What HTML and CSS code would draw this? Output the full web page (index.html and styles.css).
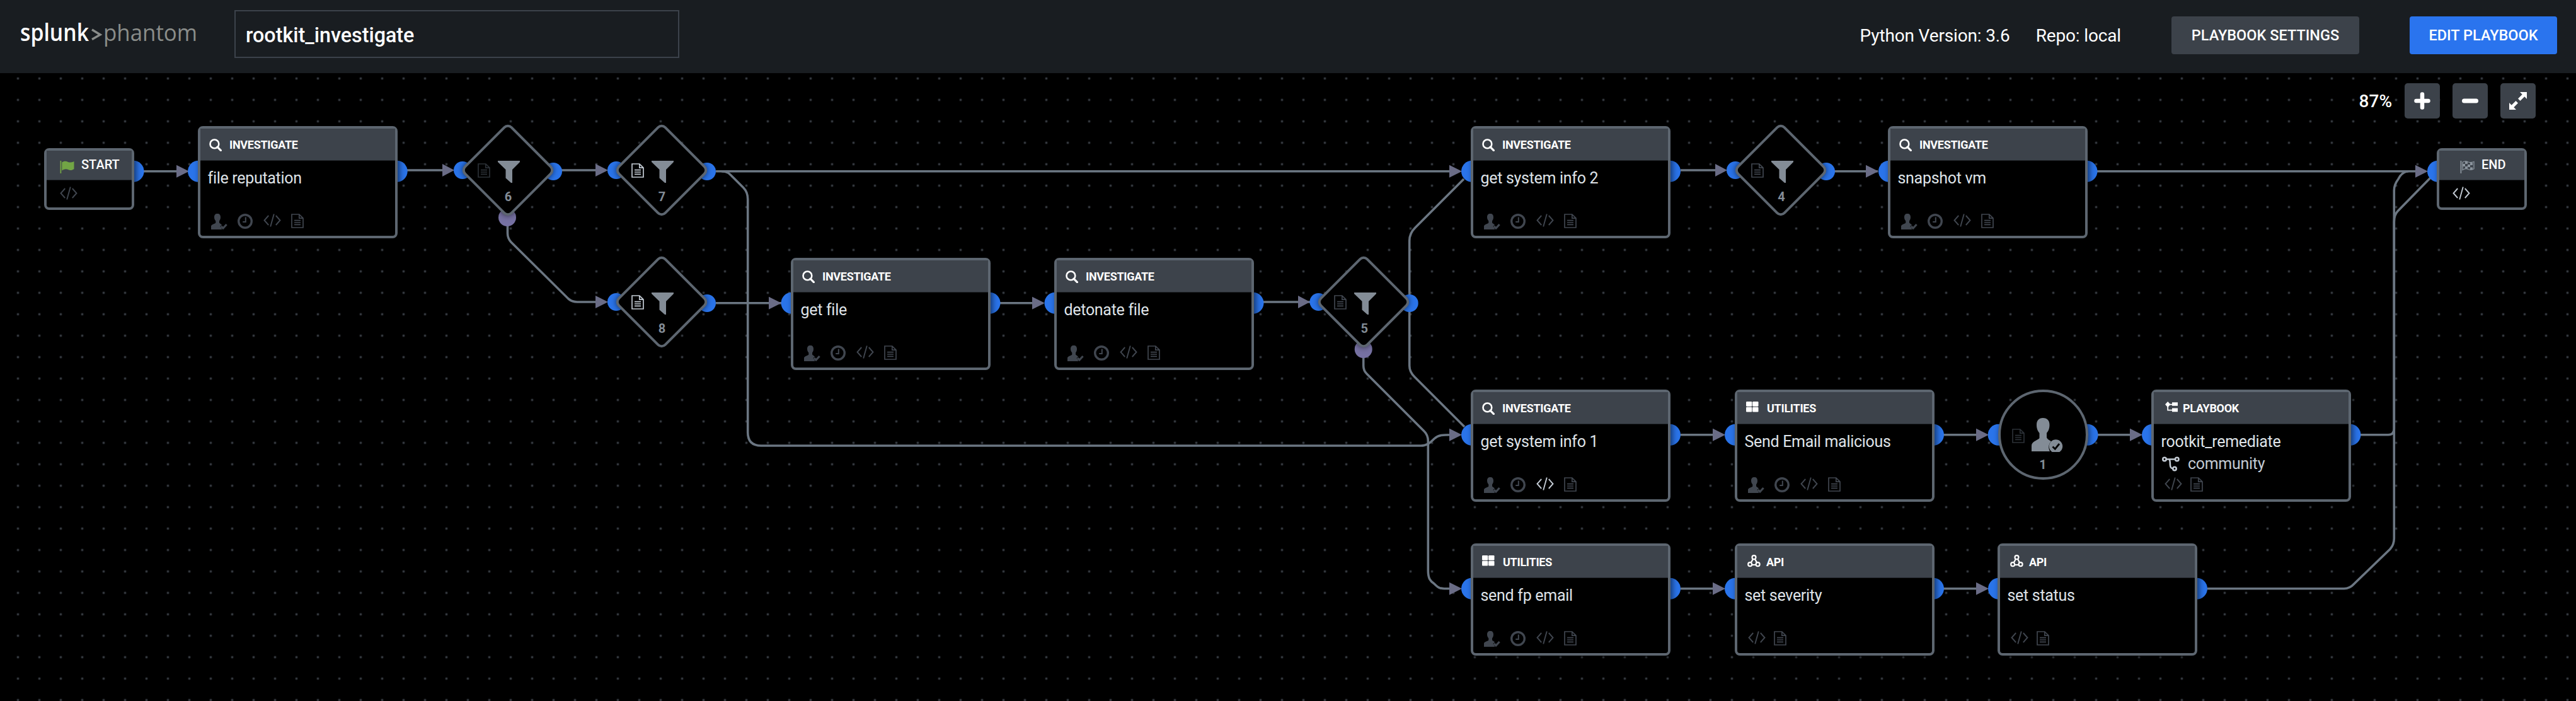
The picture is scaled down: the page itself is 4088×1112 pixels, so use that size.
FILE: index.html
```html
<!DOCTYPE html>
<html lang="en">
<head>
<meta charset="utf-8">
<title>rootkit_investigate</title>
<link rel="stylesheet" href="styles.css">
</head>
<body>
<svg class="sprite" aria-hidden="true">
  <symbol id="search" viewBox="0 0 20 20"><circle cx="8.4" cy="8.4" r="6.9" fill="none" stroke="currentColor" stroke-width="2.6"/><path d="M13 13.2L18.4 18.6" stroke="currentColor" stroke-width="3.2" stroke-linecap="round"/></symbol>
  <symbol id="grid" viewBox="0 0 20 17"><rect x="0" y="0" width="9.3" height="7.8" rx="1.3"/><rect x="10.2" y="0" width="9.3" height="7.8" rx="1.3"/><rect x="0" y="8.7" width="9.3" height="7.8" rx="1.3"/><rect x="10.2" y="8.7" width="9.3" height="7.8" rx="1.3"/></symbol>
  <symbol id="api" viewBox="0 0 21 20"><g fill="none" stroke="currentColor" stroke-width="2.2"><circle cx="10.5" cy="4.2" r="3"/><circle cx="4.2" cy="15.2" r="3"/><circle cx="16.6" cy="15.2" r="3"/><path d="M9 6.8L5.7 12.6M12 6.8L15.2 12.6M7.2 16H13.6"/></g></symbol>
  <symbol id="flow" viewBox="0 0 20 17"><path d="M4.2 0L8.4 4.6L4.2 9.2L0 4.6ZM11 1.2H20V6.8H11ZM11 10.5H20V16.3H11Z"/><path d="M7 4.6H12M4.2 8V13.7H12" fill="none" stroke="currentColor" stroke-width="1.8"/></symbol>
  <symbol id="branch" viewBox="0 0 28 24"><g fill="none" stroke="currentColor" stroke-width="2.6"><circle cx="4" cy="4.5" r="2.7"/><circle cx="23.8" cy="4.5" r="2.7"/><circle cx="20" cy="19.5" r="2.7"/><path d="M6.8 4.5H21M11.5 4.5C13.5 7 12.5 10 13 14C13.3 17.5 14.5 19 17 19.2"/></g></symbol>
  <symbol id="user" viewBox="0 0 26 25"><path d="M10 0C13.400 0 15 2 15 5.500C15 8.500 14.200 10 13 11.500V14.500C14 15.800 16.500 16.400 17 18L14.500 20L17.500 25H0V19.500C1 16.500 6.500 16 7.300 14.500V11.500C6 10 5 8.500 5 5.500C5 2 6.600 0 10 0Z"/><path d="M15.800 20L19 23L24.600 17" fill="none" stroke="currentColor" stroke-width="3.200"/></symbol>
  <symbol id="clock" viewBox="0 0 24 24"><circle cx="12" cy="12" r="10.3" fill="none" stroke="currentColor" stroke-width="3.4"/><path d="M12.8 5.500V13H8.200" fill="none" stroke="currentColor" stroke-width="2"/></symbol>
  <symbol id="code" viewBox="0 0 28 21"><path d="M8.200 3L1.500 10.500L8.200 18M19.800 3L26.500 10.500L19.800 18M16.800 .5L11.200 20.500" fill="none" stroke="currentColor" stroke-width="1.900"/></symbol>
  <symbol id="doc" viewBox="0 0 20 23"><path d="M1 1H12.800L19 7.200V22H1ZM12.800 1V7.200H19M5 10.700H15M5 14H15M5 17.300H15" fill="none" stroke="currentColor" stroke-width="1.700"/></symbol>
  <symbol id="funnel" viewBox="0 0 35 35"><path d="M0 0H35V2L23 14V35H21L12.500 27.500V14L0 2Z"/></symbol>
  <symbol id="flag" viewBox="0 0 23 21"><path d="M.5 1H2.300V21H.5Z"/><path d="M3.300 3.500C7 1 10 1.500 13 3C16 4.200 19 3.500 22.500 2V14C19 16.500 16 16.500 13 15C10 13.500 7 14 3.300 16.500Z"/></symbol>
  <symbol id="finish" viewBox="0 0 23 21"><path d="M.5 1H2.300V21H.5Z"/><path d="M4 3.300C7 1.300 10 1.600 13 3C16 4.200 19 3.500 22 2.500V13.800C19 15.800 16 15.800 13 14.500C10 13 7 13.500 4 15.500Z" fill="none" stroke="currentColor" stroke-width="1.300"/><path d="M8 2H12V6H8ZM16 4H20V8H16ZM4 6H8V10H4ZM12 7H16V11H12ZM8 10H12V13.500H8ZM16 11.500H20V15H16Z"/></symbol>
  <symbol id="approver" viewBox="0 0 50 54"><path d="M18 0C25 0 28.500 4 28.500 11C28.500 17 26.500 21 24 24V31C25 34 28.500 35.500 31 37C26.500 42 26.500 48 29 53H0V44C0 37 10 35.500 12.500 32V24C10 21 8 17 8 11C8 4 11.500 0 18 0Z"/><circle cx="38.500" cy="45" r="10.700"/><path d="M33.500 45.500L37.300 49.200L44 41" fill="none" stroke="#000" stroke-width="2.800"/></symbol>
</svg>

<header class="topbar">
  <svg class="logo" width="290" height="64" viewBox="0 0 290 64" role="img" aria-label="splunk&gt;phantom">
    <text class="logo-main" x="0" y="43" textLength="109" lengthAdjust="spacingAndGlyphs">splunk</text>
    <path class="logo-caret" d="M114 25L127 33L114 40.500"/>
    <text class="logo-sub" x="132" y="43" textLength="149" lengthAdjust="spacingAndGlyphs">phantom</text>
  </svg>
  <div class="name-field">rootkit_investigate</div>
  <div class="meta"><span>Python Version: 3.6</span><span>Repo: local</span></div>
  <button class="btn btn-settings">PLAYBOOK SETTINGS</button>
  <button class="btn btn-edit">EDIT PLAYBOOK</button>
</header>

<main class="canvas">
  <svg class="edges" width="4088" height="1112" viewBox="0 0 4088 1112">
    <g class="wires">
      <path d="M228 271.700H285M646 270H705M890 270H950M1136 271.700H2305M1587 480.700H1655M1136 480.700H1240M2005 479H2080M2667 270H2725M2911 271.700H2980M3328 271.700H3840M2667 689.700H2720M3084 689.700H3140M3329 689.700H3385M2667 933.700H2720M3084 933.700H3140"/>
      <path d="M805.500 355V370Q805.500 378 811 384L902 474Q908 479 916 479H950"/>
      <path d="M1145 271.700C1155 271.700 1158 276 1164 282L1180 298Q1186.700 305 1186.700 316V686Q1186.700 707 1208 707H2255C2264 707 2269 703 2276 696C2283 690 2289 689.700 2305 689.700"/>
      <path d="M2323 284L2246 361Q2236.700 370 2236.700 382V580Q2236.700 590 2245 598L2324 677"/>
      <path d="M2163.700 560V580Q2163.700 588 2169 593L2260 684Q2266.300 690 2266.300 700V905C2266.300 918 2270 922 2276 926C2282 932 2285 933.700 2292 933.700H2305"/>
      <path d="M3746 689.700H3790Q3799.300 689.700 3799.300 680V302Q3799.300 293 3806 284Q3812 272 3822 271.700"/>
      <path d="M3503 933.700H3720Q3729 933.700 3736 926L3793 871Q3799.300 864 3799.300 854V352Q3799.300 341 3805 335L3857 282"/>
    </g>
    <g class="heads">
      <path d="M280 261.700L300 271.700L280 281.700ZM702 260L721 270L702 280ZM945 260L965 270L945 280ZM945 469L965 479L945 489ZM1220 470.700L1240 480.700L1220 490.700ZM1638 470.700L1658 480.700L1638 490.700ZM2060 469L2079 479L2060 489ZM2300 261.700L2320 271.700L2300 281.700ZM2300 679.700L2320 689.700L2300 699.700ZM2300 923.700L2320 933.700L2300 943.700ZM2722 260L2741 270L2722 280ZM2961 261.700L2981 271.700L2961 281.700ZM3833 261.700L3853 271.700L3833 281.700ZM2718 679.700L2738 689.700L2718 699.700ZM3136 679.700L3156 689.700L3136 699.700ZM3380 679.700L3400 689.700L3380 699.700ZM2718 923.700L2738 933.700L2718 943.700ZM3136 923.700L3156 933.700L3136 943.700Z"/>
    </g>
    <g class="ports">
      <circle cx="211.600" cy="271.700" r="17"/>
      <circle cx="315" cy="271.700" r="17"/><circle cx="629.700" cy="271.700" r="17"/>
      <circle cx="1256.500" cy="480.700" r="17"/><circle cx="1570.500" cy="480.700" r="17"/>
      <circle cx="1674.500" cy="480.700" r="17"/><circle cx="1988.500" cy="480.700" r="17"/>
      <circle cx="2336" cy="271.700" r="17"/><circle cx="2650" cy="271.700" r="17"/>
      <circle cx="2998" cy="271.700" r="17"/><circle cx="3311.500" cy="271.700" r="17"/>
      <circle cx="3869" cy="271.700" r="17"/>
      <circle cx="2336" cy="689.700" r="17"/><circle cx="2650" cy="689.700" r="17"/>
      <circle cx="2754" cy="689.700" r="17"/><circle cx="3068" cy="689.700" r="17"/>
      <circle cx="3171.600" cy="689.700" r="17"/><circle cx="3312.600" cy="689.700" r="17"/>
      <circle cx="3416" cy="689.700" r="17"/><circle cx="3729.500" cy="689.700" r="17"/>
      <circle cx="2336" cy="933.700" r="17"/><circle cx="2650" cy="933.700" r="17"/>
      <circle cx="2754" cy="933.700" r="17"/><circle cx="3068" cy="933.700" r="17"/>
      <circle cx="3172" cy="933.700" r="17"/><circle cx="3486" cy="933.700" r="17"/>
      <circle cx="734" cy="270" r="14"/><circle cx="878" cy="272" r="14"/>
      <circle cx="978" cy="270" r="14"/><circle cx="1122" cy="272" r="14"/>
      <circle cx="978" cy="479" r="14"/><circle cx="1122" cy="481" r="14"/>
      <circle cx="2092.500" cy="479" r="14"/><circle cx="2236.700" cy="481" r="14"/>
      <circle cx="2754" cy="270" r="14"/><circle cx="2898" cy="272" r="14"/>
      <circle class="port-else" cx="805" cy="345" r="14"/><circle class="port-else" cx="2163.700" cy="554" r="14"/>
    </g>
  </svg>

  <section class="terminal" style="left:70px;top:235px">
    <h2 class="terminal-head"><svg class="flag-go" width="23" height="21"><use href="#flag"/></svg><span>START</span></h2>
    <svg class="terminal-code" width="28" height="21"><use href="#code"/></svg>
  </section>
  <section class="terminal terminal-end" style="left:3867px;top:235px">
    <h2 class="terminal-head"><svg class="flag-end" width="23" height="21"><use href="#finish"/></svg><span>END</span></h2>
    <svg class="terminal-code on" width="28" height="21"><use href="#code"/></svg>
  </section>

  <section class="card" style="left:314px;top:200px">
    <h2 class="card-head"><svg width="20" height="20"><use href="#search"/></svg>INVESTIGATE</h2>
    <p class="card-title">file reputation</p>
    <div class="tools"><svg width="26" height="25"><use href="#user"/></svg><svg width="24" height="24"><use href="#clock"/></svg><svg width="28" height="21"><use href="#code"/></svg><svg width="20" height="23"><use href="#doc"/></svg></div>
  </section>
  <section class="card" style="left:1255px;top:409px">
    <h2 class="card-head"><svg width="20" height="20"><use href="#search"/></svg>INVESTIGATE</h2>
    <p class="card-title">get file</p>
    <div class="tools"><svg width="26" height="25"><use href="#user"/></svg><svg width="24" height="24"><use href="#clock"/></svg><svg width="28" height="21"><use href="#code"/></svg><svg width="20" height="23"><use href="#doc"/></svg></div>
  </section>
  <section class="card" style="left:1673px;top:409px">
    <h2 class="card-head"><svg width="20" height="20"><use href="#search"/></svg>INVESTIGATE</h2>
    <p class="card-title">detonate file</p>
    <div class="tools"><svg width="26" height="25"><use href="#user"/></svg><svg width="24" height="24"><use href="#clock"/></svg><svg width="28" height="21"><use href="#code"/></svg><svg width="20" height="23"><use href="#doc"/></svg></div>
  </section>
  <section class="card" style="left:2334px;top:200px">
    <h2 class="card-head"><svg width="20" height="20"><use href="#search"/></svg>INVESTIGATE</h2>
    <p class="card-title">get system info 2</p>
    <div class="tools"><svg width="26" height="25"><use href="#user"/></svg><svg width="24" height="24"><use href="#clock"/></svg><svg width="28" height="21"><use href="#code"/></svg><svg width="20" height="23"><use href="#doc"/></svg></div>
  </section>
  <section class="card" style="left:2996px;top:200px">
    <h2 class="card-head"><svg width="20" height="20"><use href="#search"/></svg>INVESTIGATE</h2>
    <p class="card-title">snapshot vm</p>
    <div class="tools"><svg width="26" height="25"><use href="#user"/></svg><svg width="24" height="24"><use href="#clock"/></svg><svg width="28" height="21"><use href="#code"/></svg><svg width="20" height="23"><use href="#doc"/></svg></div>
  </section>
  <section class="card" style="left:2334px;top:618px">
    <h2 class="card-head"><svg width="20" height="20"><use href="#search"/></svg>INVESTIGATE</h2>
    <p class="card-title">get system info 1</p>
    <div class="tools"><svg width="26" height="25"><use href="#user"/></svg><svg width="24" height="24"><use href="#clock"/></svg><svg class="on" width="28" height="21"><use href="#code"/></svg><svg width="20" height="23"><use href="#doc"/></svg></div>
  </section>
  <section class="card" style="left:2753px;top:618px">
    <h2 class="card-head utilities"><svg width="20" height="17"><use href="#grid"/></svg>UTILITIES</h2>
    <p class="card-title">Send Email malicious</p>
    <div class="tools"><svg width="26" height="25"><use href="#user"/></svg><svg width="24" height="24"><use href="#clock"/></svg><svg width="28" height="21"><use href="#code"/></svg><svg width="20" height="23"><use href="#doc"/></svg></div>
  </section>
  <section class="card" style="left:3414px;top:618px">
    <h2 class="card-head playbook"><svg width="20" height="17"><use href="#flow"/></svg>PLAYBOOK</h2>
    <p class="card-title">rootkit_remediate</p>
    <p class="card-repo"><svg width="28" height="24"><use href="#branch"/></svg>community</p>
    <div class="tools compact"><svg width="28" height="21"><use href="#code"/></svg><svg width="20" height="23"><use href="#doc"/></svg></div>
  </section>
  <section class="card" style="left:2334px;top:862px">
    <h2 class="card-head utilities"><svg width="20" height="17"><use href="#grid"/></svg>UTILITIES</h2>
    <p class="card-title">send fp email</p>
    <div class="tools"><svg width="26" height="25"><use href="#user"/></svg><svg width="24" height="24"><use href="#clock"/></svg><svg width="28" height="21"><use href="#code"/></svg><svg width="20" height="23"><use href="#doc"/></svg></div>
  </section>
  <section class="card" style="left:2753px;top:862px">
    <h2 class="card-head api"><svg width="21" height="20"><use href="#api"/></svg>API</h2>
    <p class="card-title">set severity</p>
    <div class="tools compact"><svg width="28" height="21"><use href="#code"/></svg><svg width="20" height="23"><use href="#doc"/></svg></div>
  </section>
  <section class="card" style="left:3170px;top:862px">
    <h2 class="card-head api"><svg width="21" height="20"><use href="#api"/></svg>API</h2>
    <p class="card-title">set status</p>
    <div class="tools compact"><svg width="28" height="21"><use href="#code"/></svg><svg width="20" height="23"><use href="#doc"/></svg></div>
  </section>

  <section class="filter" style="left:733.500px;top:198px"><div class="filter-body"><svg class="note" width="20" height="23"><use href="#doc"/></svg><svg class="sign" width="35" height="35"><use href="#funnel"/></svg><b>6</b></div></section>
  <section class="filter" style="left:977.500px;top:198px"><div class="filter-body"><svg class="note on" width="20" height="23"><use href="#doc"/></svg><svg class="sign" width="35" height="35"><use href="#funnel"/></svg><b>7</b></div></section>
  <section class="filter" style="left:977.500px;top:407px"><div class="filter-body"><svg class="note on" width="20" height="23"><use href="#doc"/></svg><svg class="sign" width="35" height="35"><use href="#funnel"/></svg><b>8</b></div></section>
  <section class="filter" style="left:2092.300px;top:407px"><div class="filter-body"><svg class="note dim" width="20" height="23"><use href="#doc"/></svg><svg class="sign" width="35" height="35"><use href="#funnel"/></svg><b>5</b></div></section>
  <section class="filter" style="left:2754px;top:198px"><div class="filter-body"><svg class="note dim" width="20" height="23"><use href="#doc"/></svg><svg class="sign" width="35" height="35"><use href="#funnel"/></svg><b>4</b></div></section>

  <section class="prompt" style="left:3171px;top:618px"><svg class="note" width="20" height="23"><use href="#doc"/></svg><svg class="sign" width="50" height="54"><use href="#approver"/></svg><b>1</b></section>

  <div class="zoom">
    <span>87%</span>
    <button aria-label="Zoom in"><svg width="28" height="28"><path d="M14 3.500V24.500M4.500 14H23.500" fill="none" stroke="currentColor" stroke-width="6.500" stroke-linecap="round"/></svg></button>
    <button aria-label="Zoom out"><svg width="28" height="28"><path d="M4.500 14H23.500" fill="none" stroke="currentColor" stroke-width="7" stroke-linecap="round"/></svg></button>
    <button aria-label="Fit"><svg width="28" height="28"><path d="M17 0H28V11L24.300 7.300L17.500 14L14 10.500L20.700 3.700ZM0 17L3.700 20.700L10.500 14L14 17.500L7.300 24.300L11 28H0Z"/></svg></button>
  </div>
</main>
</body>
</html>
```
FILE: styles.css
```css
* { box-sizing: border-box; }

body {
  margin: 0;
  width: 4088px;
  height: 1112px;
  overflow: hidden;
  position: relative;
  background: #000;
  color: #fff;
  font-family: Roboto, "Liberation Sans", sans-serif;
}

svg { display: block; flex: none; fill: currentColor; }
h2, p { margin: 0; }
button { border: 0; padding: 0; color: #fff; font-family: inherit; }
.sprite { position: absolute; width: 0; height: 0; }

/* Top bar */
.topbar {
  display: flex;
  align-items: center;
  height: 116px;
  padding: 0 30px 8px 32px;
  background: #191d21;
}
.logo { margin-right: 50px; overflow: visible; }
.logo-main { font: 600 37px "Open Sans", sans-serif; fill: #fff; }
.logo-sub { font: 400 37px "Open Sans", sans-serif; fill: #8a8d8a; }
.logo-caret { fill: none; stroke: #8a8d8a; stroke-width: 3.5; }
.name-field {
  display: flex;
  align-items: center;
  width: 706px;
  height: 76px;
  padding: 4px 0 0 16px;
  border: 2px solid #3c424b;
  font-size: 32.3px;
  font-weight: 500;
}
.meta {
  display: flex;
  gap: 41px;
  margin: 4px 80px 0 auto;
  font-size: 28px;
  letter-spacing: -.15px;
}
.btn {
  height: 60px;
  margin-top: 4px;
  border-radius: 4px;
  font-size: 23.5px;
  font-weight: 500;
}
.btn-settings { width: 298px; margin-right: 80px; background: #3c424a; }
.btn-edit { width: 234px; background: #2a74ee; }

/* Playbook canvas: the graph plane starts under the top bar */
.canvas {
  height: 996px;
  background-image: radial-gradient(circle, #50565e 0, #282c31 1.5px, transparent 2.5px);
  background-size: 34px 34px;
  background-position: 11.500px -8.500px;
}
.edges { position: absolute; left: 0; top: 0; }
.wires { fill: none; stroke: #6b7682; stroke-width: 3.600; }
.heads { fill: #6a6c86; }
.ports { fill: #2a74ea; }
.port-else { fill: #7671a2; }

.zoom {
  position: absolute;
  top: 132px;
  right: 64px;
  display: flex;
  align-items: center;
  gap: 20px;
  font-size: 28px;
  font-weight: 500;
}
.zoom button {
  display: grid;
  place-items: center;
  width: 56px;
  height: 56px;
  border-radius: 5px;
  background: #3c424a;
}

/* Action blocks */
.card, .terminal {
  position: absolute;
  display: flex;
  flex-direction: column;
  border: 4px solid #5d6670;
  border-radius: 8px;
  background: #000;
  box-shadow: 3px 2px 10px rgba(0, 0, 0, .55);
}
.card { width: 317px; height: 178px; }
.card-head {
  display: flex;
  align-items: center;
  gap: 12px;
  height: 51px;
  padding: 1px 0 0 14px;
  border-bottom: 1px solid #24282d;
  background: #3d434b;
  font-size: 18px;
  font-weight: 700;
  letter-spacing: -.3px;
}
.card-head.utilities { gap: 13px; padding-left: 14px; }
.card-head.utilities svg { margin-top: -5px; }
.card-head.playbook { gap: 8px; padding-left: 18px; }
.card-head.playbook svg { margin-top: -4px; }
.card-head.api { gap: 9px; padding-left: 16px; }
.card-head.api svg { margin-top: -3px; }
.card-title {
  padding: 13px 0 0 11.5px;
  font-size: 25px;
  line-height: 30px;
  letter-spacing: -.3px;
  color: #dfe3e8;
}
.card-repo {
  display: flex;
  align-items: center;
  gap: 13px;
  padding: 5px 0 0 13px;
  font-size: 25px;
  line-height: 30px;
  letter-spacing: -.3px;
  color: #c3cbd4;
}
.tools {
  display: flex;
  gap: 16.5px;
  height: 35px;
  margin-top: auto;
  padding-left: 16.5px;
  color: #40464f;
}
.tools.compact { gap: 13px; }
.on { color: #c3cbd4; }

/* Start and end blocks */
.terminal { width: 143px; height: 98px; }
.terminal-head {
  display: flex;
  align-items: center;
  gap: 11px;
  height: 47px;
  padding: 0 0 3px 21px;
  border-bottom: 1px solid #24282d;
  background: #3d434b;
  font-size: 20px;
  font-weight: 500;
}
.terminal-head svg { margin-top: 8px; }
.terminal-end .terminal-head { padding-left: 33px; }
.flag-go { color: #72a545; }
.flag-end { color: #8a939c; }
.terminal-code { margin: 10px 0 0 21px; color: #40464f; }
.terminal-code.on { color: #c3cbd4; }

/* Filter blocks: a rotated square with upright contents */
.filter { position: absolute; width: 144px; height: 144px; }
.filter::before {
  content: "";
  position: absolute;
  inset: 18px;
  border: 4px solid #5d6670;
  border-radius: 10px;
  background: #000;
  box-shadow: 0 0 10px rgba(0, 0, 0, .6);
  transform: rotate(45deg);
}
.filter-body {
  position: relative;
  display: grid;
  grid-template: 35px 40px / 20px 35px;
  column-gap: 12px;
  padding: 57px 0 0 24.500px;
  color: #838c96;
}
.note { margin-top: 4px; color: #2b3036; }
.note.dim { color: #40464f; }
.note.on { color: #c3cbd4; }
b {
  grid-column: 2;
  font-size: 20px;
  line-height: 24px;
  text-align: center;
}
.filter b { padding: 10px 2px 0 0; }

/* Prompt block */
.prompt {
  position: absolute;
  display: grid;
  grid-template: 54px 30px / 20px 50px;
  column-gap: 11px;
  width: 143px;
  height: 143px;
  padding: 41px 0 0 18px;
  border: 4px solid #5d6670;
  border-radius: 50%;
  background: #000;
  box-shadow: 2px 2px 10px rgba(0, 0, 0, .55);
  color: #838c96;
}
.prompt .note { margin-top: 17px; }
.prompt b { padding: 8px 14px 0 0; }
```
